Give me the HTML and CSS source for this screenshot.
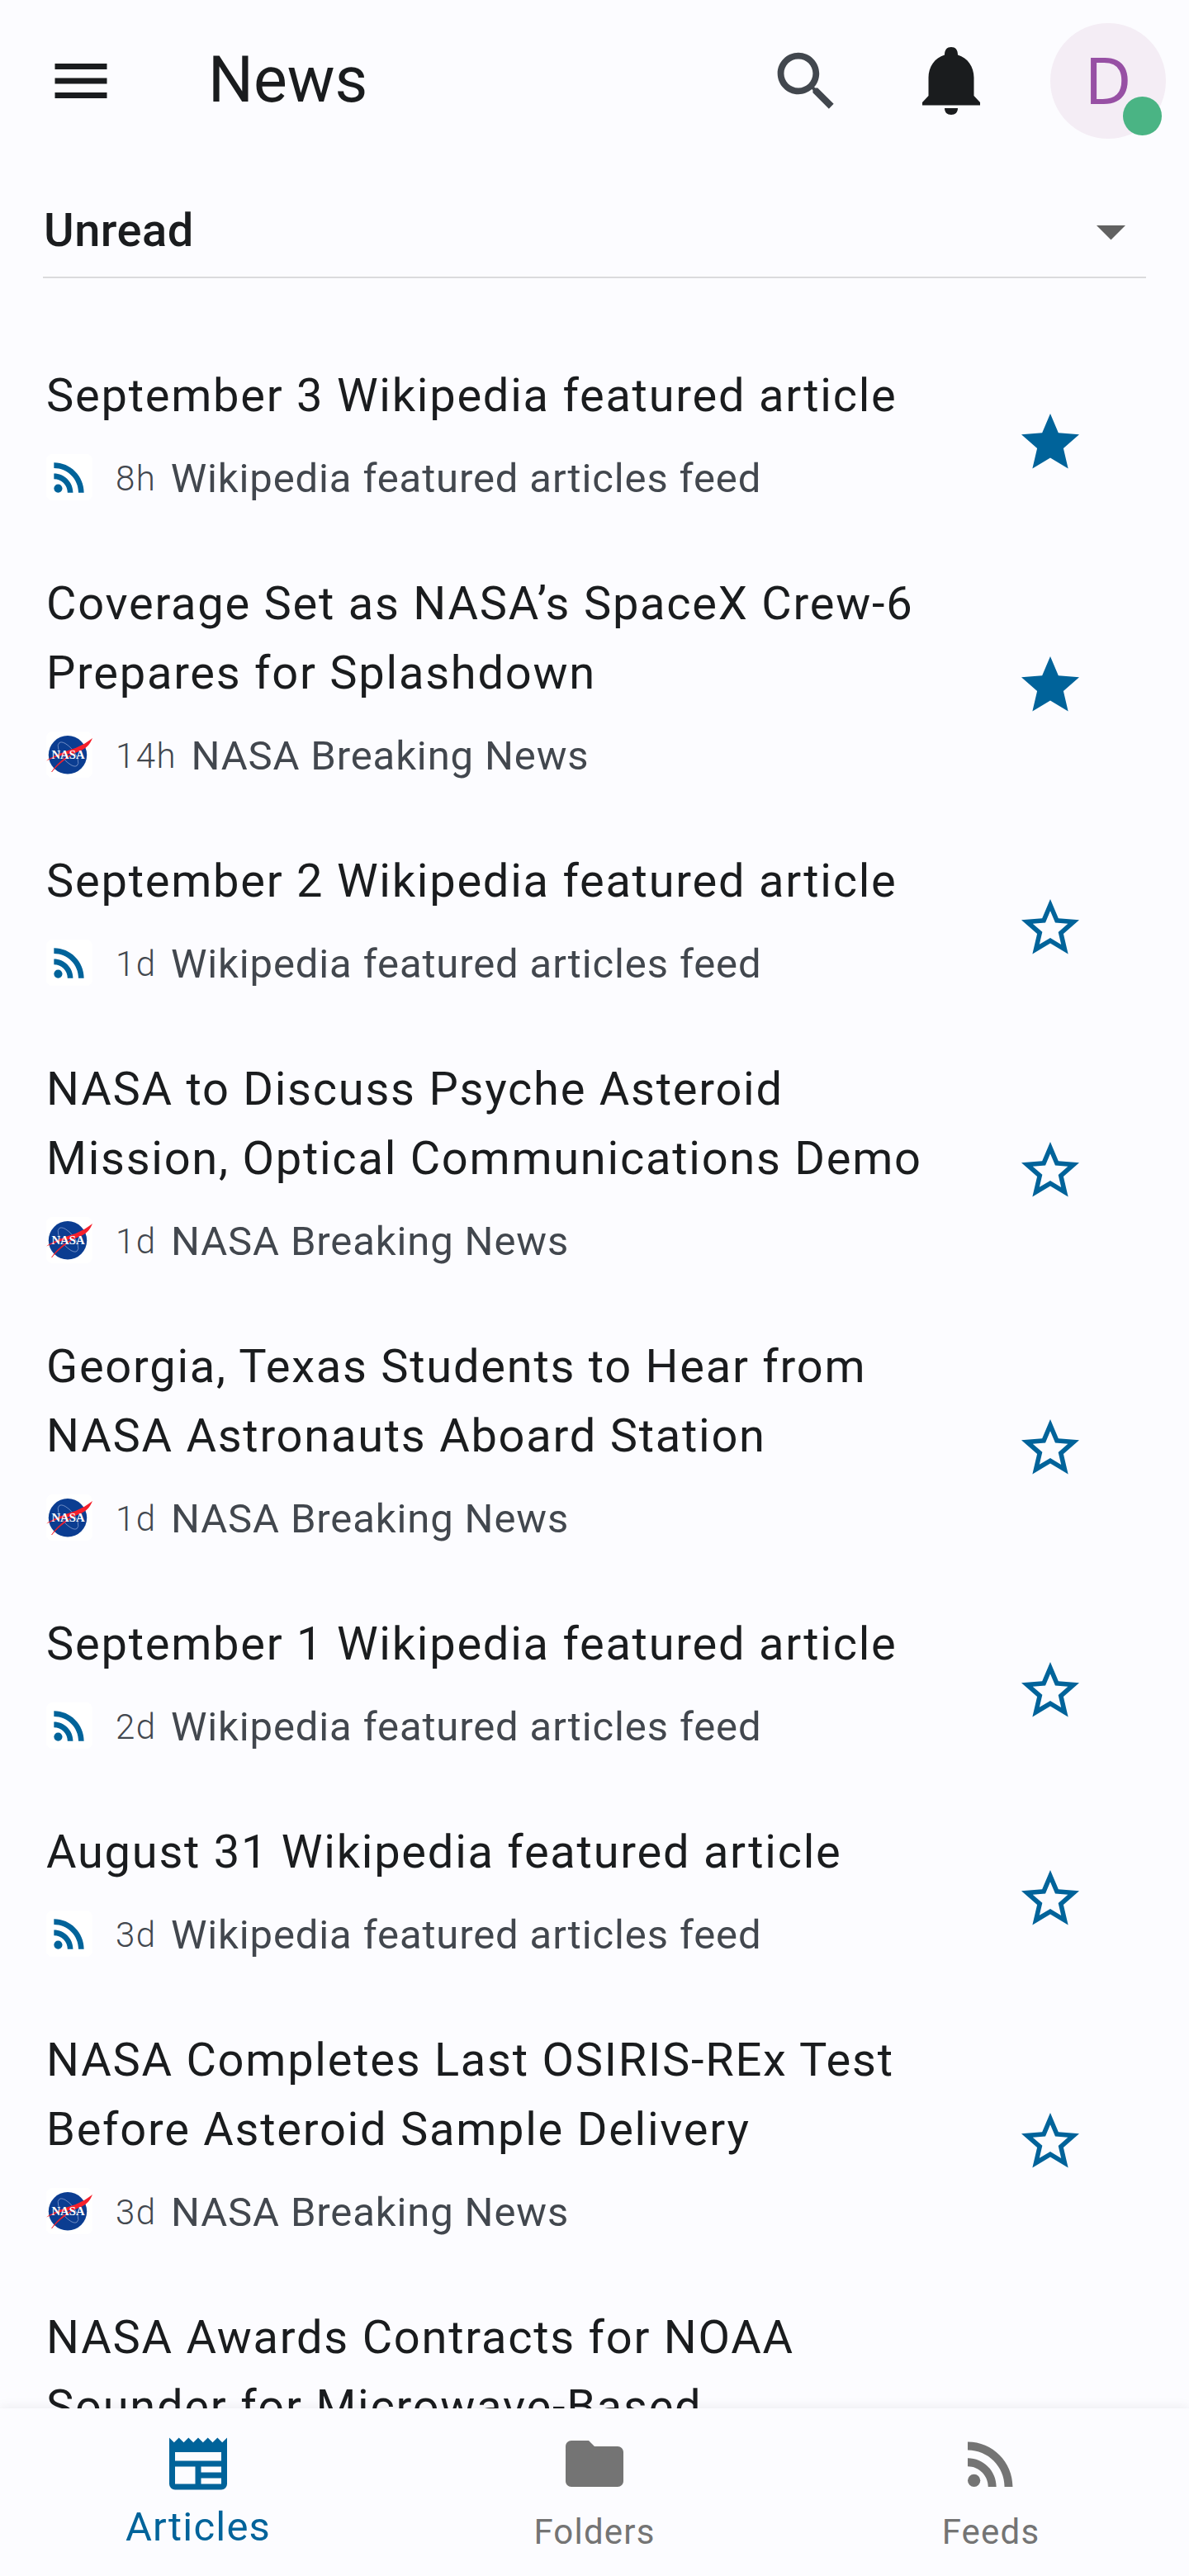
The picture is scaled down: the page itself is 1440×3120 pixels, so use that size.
FILE: index.html
```html
<!DOCTYPE html>
<html lang="en">
<head>
<meta charset="utf-8">
<title>News</title>
<link rel="stylesheet" href="styles.css">
</head>
<body>
<svg class="defs" aria-hidden="true">
  <symbol id="rss" viewBox="0 0 24 24"><circle cx="6.18" cy="17.82" r="2.18"/><path d="M4 4.44v2.83c7.03 0 12.73 5.7 12.73 12.73h2.83c0-8.59-6.97-15.56-15.56-15.56zm0 5.66v2.83c3.9 0 7.07 3.17 7.07 7.07h2.83c0-5.47-4.43-9.9-9.9-9.9z"/></symbol>
  <symbol id="star" viewBox="0 0 24 24"><path d="M12 17.27 18.18 21l-1.64-7.03L22 9.24l-7.19-.61L12 2 9.19 8.63 2 9.24l5.46 4.73L5.82 21z"/></symbol>
  <symbol id="star-outline" viewBox="0 0 24 24"><path d="M22 9.24l-7.19-.62L12 2 9.19 8.63 2 9.24l5.46 4.73L5.82 21 12 17.27 18.18 21l-1.63-7.03L22 9.24zM12 15.4l-3.76 2.27 1-4.28-3.32-2.88 4.38-.38L12 6.1l1.71 4.04 4.38.38-3.32 2.88 1 4.28L12 15.4z"/></symbol>
  <symbol id="nasa" viewBox="0 0 56 56">
    <circle cx="26" cy="28.3" r="23.2" fill="#0b3d91"/>
    <ellipse cx="26.500" cy="27.500" rx="7.500" ry="17.500" fill="none" stroke="#7d97cc" stroke-width=".8" transform="rotate(-38 26.500 27.500)"/>
    <path d="M56 8C53 15 50 19 44 22 38 25 34 26 28 27 18 28.500 9 31.500 0 35.500c8-6 18-9.500 28-13 10-3 20-8 28-14.500z" fill="#f5202c"/>
    <path d="M6.500 49C13 39 24 29 38 24 27 30 16 38 6.500 49z" fill="#f5202c" stroke="#f5202c" stroke-width=".6"/>
    <text x="6.5" y="33.2" textLength="40" lengthAdjust="spacingAndGlyphs" class="nasa-word">NASA</text>
  </symbol>
</svg>

<div class="screen">
  <header class="topbar">
    <svg class="icon menu" viewBox="0 0 24 24"><path d="M3 18h18v-2H3v2zm0-5h18v-2H3v2zm0-7v2h18V6H3z"/></svg>
    <h1 class="title">News</h1>
    <svg class="search" viewBox="0 0 24 24"><path d="M15.5 14h-.79l-.28-.27C15.41 12.59 16 11.11 16 9.5 16 5.91 13.09 3 9.5 3S3 5.91 3 9.5 5.91 16 9.5 16c1.61 0 3.09-.59 4.23-1.57l.27.28v.79l5 4.99L20.49 19l-4.99-5zm-6 0C7.01 14 5 11.99 5 9.5S7.01 5 9.5 5 14 7.01 14 9.5 11.99 14 9.5 14z"/></svg>
    <svg class="bell" viewBox="0 0 70 82"><path d="M27 9.500C27 3 30 0 35 0s8 3 8 9.500C55 13 62.500 24 62.500 37v22l7.500 8v3.500H0V67l7.500-8V37C7.500 24 15 13 27 9.500zM27 74h16c0 5-3 8-8 8s-8-3-8-8z"/></svg>
    <div class="avatar">D<span class="status"></span></div>
  </header>

  <div class="filter">
    <span>Unread</span>
    <svg class="caret" viewBox="0 0 10 5"><path d="M0 0h10L5 5z"/></svg>
  </div>

  <main class="list">
    <article class="item">
      <div class="body"><h2 class="headline">September 3 Wikipedia featured article</h2>
        <div class="meta"><svg class="favicon"><use href="#rss"/></svg><span class="time">8h</span><span class="feed">Wikipedia featured articles feed</span></div></div>
      <svg class="icon star"><use href="#star"/></svg>
    </article>
    <article class="item">
      <div class="body"><h2 class="headline">Coverage Set as NASA’s SpaceX Crew-6<br>Prepares for Splashdown</h2>
        <div class="meta"><svg class="favicon"><use href="#nasa"/></svg><span class="time">14h</span><span class="feed">NASA Breaking News</span></div></div>
      <svg class="icon star"><use href="#star"/></svg>
    </article>
    <article class="item">
      <div class="body"><h2 class="headline">September 2 Wikipedia featured article</h2>
        <div class="meta"><svg class="favicon"><use href="#rss"/></svg><span class="time">1d</span><span class="feed">Wikipedia featured articles feed</span></div></div>
      <svg class="icon star"><use href="#star-outline"/></svg>
    </article>
    <article class="item">
      <div class="body"><h2 class="headline">NASA to Discuss Psyche Asteroid<br>Mission, Optical Communications Demo</h2>
        <div class="meta"><svg class="favicon"><use href="#nasa"/></svg><span class="time">1d</span><span class="feed">NASA Breaking News</span></div></div>
      <svg class="icon star"><use href="#star-outline"/></svg>
    </article>
    <article class="item">
      <div class="body"><h2 class="headline">Georgia, Texas Students to Hear from<br>NASA Astronauts Aboard Station</h2>
        <div class="meta"><svg class="favicon"><use href="#nasa"/></svg><span class="time">1d</span><span class="feed">NASA Breaking News</span></div></div>
      <svg class="icon star"><use href="#star-outline"/></svg>
    </article>
    <article class="item">
      <div class="body"><h2 class="headline">September 1 Wikipedia featured article</h2>
        <div class="meta"><svg class="favicon"><use href="#rss"/></svg><span class="time">2d</span><span class="feed">Wikipedia featured articles feed</span></div></div>
      <svg class="icon star"><use href="#star-outline"/></svg>
    </article>
    <article class="item">
      <div class="body"><h2 class="headline">August 31 Wikipedia featured article</h2>
        <div class="meta"><svg class="favicon"><use href="#rss"/></svg><span class="time">3d</span><span class="feed">Wikipedia featured articles feed</span></div></div>
      <svg class="icon star"><use href="#star-outline"/></svg>
    </article>
    <article class="item">
      <div class="body"><h2 class="headline">NASA Completes Last OSIRIS-REx Test<br>Before Asteroid Sample Delivery</h2>
        <div class="meta"><svg class="favicon"><use href="#nasa"/></svg><span class="time">3d</span><span class="feed">NASA Breaking News</span></div></div>
      <svg class="icon star"><use href="#star-outline"/></svg>
    </article>
    <article class="item">
      <div class="body"><h2 class="headline">NASA Awards Contracts for NOAA<br>Sounder for Microwave-Based</h2></div>
    </article>
  </main>

  <nav class="bottomnav">
    <a class="tab active"><svg class="icon" viewBox="0 0 24 24"><path d="M20,11H4V8H20M20,15H13V13H20M20,19H13V17H20M11,19H4V13H11M20.33,4.67L18.67,3L17,4.67L15.33,3L13.67,4.67L12,3L10.33,4.67L8.67,3L7,4.67L5.33,3L3.67,4.67L2,3V19A2,2 0 0,0 4,21H20A2,2 0 0,0 22,19V3L20.33,4.67Z"/></svg><span>Articles</span></a>
    <a class="tab"><svg class="icon" viewBox="0 0 24 24"><path d="M10 4H4c-1.100 0-1.990.9-1.990 2L2 18c0 1.100.9 2 2 2h16c1.100 0 2-.9 2-2V8c0-1.100-.9-2-2-2h-8l-2-2z"/></svg><span>Folders</span></a>
    <a class="tab"><svg class="icon"><use href="#rss"/></svg><span>Feeds</span></a>
  </nav>
</div>
</body>
</html>
```

FILE: styles.css
```css
* { box-sizing: border-box; }

body {
  margin: 0;
  background: #fcfcff;
  color: #1a1c1e;
  font-family: Roboto, "Liberation Sans", sans-serif;
}

.defs { display: none; }

svg { display: block; flex: none; fill: currentColor; }

.icon { width: 84px; height: 84px; }

.screen {
  display: flex;
  flex-direction: column;
  width: 1440px;
  height: 3120px;
  overflow: hidden;
}

.topbar {
  display: flex;
  flex: none;
  align-items: center;
  height: 196px;
  padding: 0 28px 0 56px;
}

.title {
  flex: 1;
  margin: 0 0 2px 112px;
  font-size: 77px;
  font-weight: 400;
  line-height: 92px;
}

.search { width: 93.3px; height: 93.3px; margin: 2px 93.7px 0 0; color: #42474e; }

.bell { width: 70px; height: 82px; margin-right: 85px; }

.avatar {
  position: relative;
  width: 140px;
  height: 140px;
  border-radius: 50%;
  background: #f4edf5;
  color: #9750a4;
  font-family: "Noto Sans", Roboto, sans-serif;
  font-size: 78px;
  line-height: 136px;
  text-align: center;
}

.status {
  position: absolute;
  right: 5px;
  bottom: 4.500px;
  width: 46.600px;
  height: 46.600px;
  border-radius: 50%;
  background: #4ab484;
}

.filter {
  display: flex;
  flex: none;
  align-items: center;
  justify-content: space-between;
  height: 141px;
  margin: 0 52px;
  padding: 27px 25px 0 1px;
  border-bottom: 2px solid #dbdbdd;
  font-size: 56px;
  font-weight: 500;
  line-height: 66px;
  letter-spacing: 0.5px;
}

.caret { width: 35px; height: 17.500px; margin-top: 5.500px; color: #616161; }

.list {
  flex: 1;
  min-height: 0;
  padding-top: 74px;
  overflow: hidden;
}

.item {
  display: flex;
  align-items: center;
  justify-content: space-between;
  padding: 0 125.600px 0 56px;
}

.body { padding: 26px 0 57px; }

.headline {
  margin: 0;
  font-size: 56px;
  font-weight: 400;
  line-height: 84px;
  letter-spacing: 1.750px;
  white-space: nowrap;
}

.meta {
  display: flex;
  align-items: center;
  height: 56px;
  margin-top: 29px;
  color: #42474e;
  white-space: nowrap;
}

.favicon {
  width: 56px;
  height: 56px;
  margin-right: 28px;
  border-radius: 7px;
  background: #fff;
  color: #00639a;
}

.nasa-word { fill: #fff; font: 700 14px "Liberation Serif", serif; }

.time {
  margin-right: 17.500px;
  padding-top: 3px;
  font-size: 42px;
  font-weight: 300;
  letter-spacing: 1.400px;
}

.feed { padding-top: 3px; font-size: 49px; letter-spacing: 0.875px; }

.star { margin-bottom: 1.500px; color: #00639a; }

.bottomnav {
  position: relative;
  display: grid;
  grid-template-columns: repeat(3, 1fr);
  flex: none;
  height: 203px;
  background: #fcfcff;
  box-shadow: 0 0 14px rgba(0, 0, 0, 0.08);
}

.tab {
  display: flex;
  flex-direction: column;
  align-items: center;
  padding-top: 25px;
  color: #747474;
  font-size: 42px;
  line-height: 50px;
  letter-spacing: 1.200px;
}

.tab span { margin-top: 16px; }

.active { color: #00639a; font-size: 49px; }

.active span { margin-top: 10px; }
```
